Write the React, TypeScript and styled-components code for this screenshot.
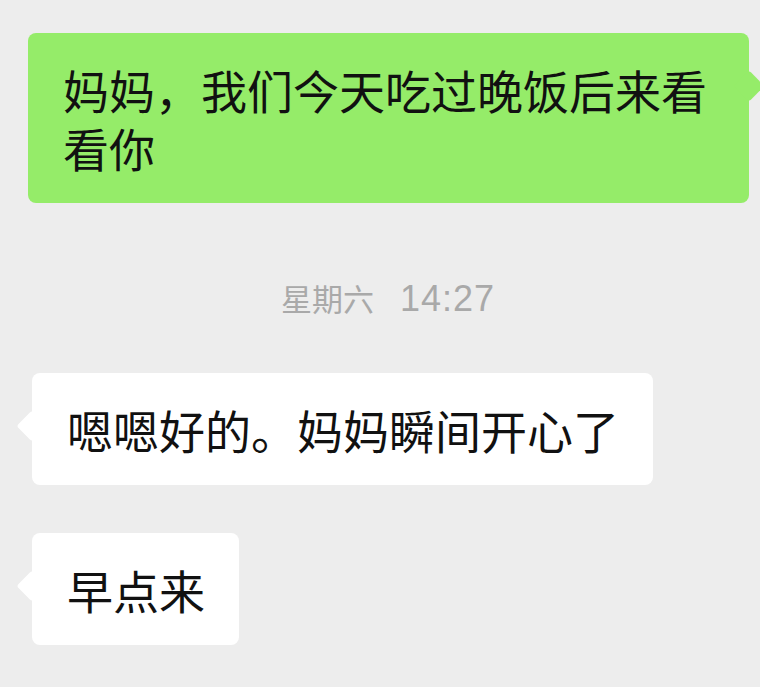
import styled, { createGlobalStyle, css } from "styled-components";

const GlobalStyle = createGlobalStyle`
  html, body {
    margin: 0;
    padding: 0;
    background: #ededed;
  }
  body {
    font-family: "Noto Sans CJK SC", "Noto Sans", sans-serif;
    overflow: hidden;
  }
`;

type Side = "self" | "other";

const messages: { id: number; side: Side; text: string }[] = [
  { id: 1, side: "self", text: "妈妈，我们今天吃过晚饭后来看看你" },
  { id: 2, side: "other", text: "嗯嗯好的。妈妈瞬间开心了" },
  { id: 3, side: "other", text: "早点来" },
];

const App = () => {
  return (
    <>
      <GlobalStyle />
      <Thread>
        <Row $side="self">
          <Bubble $side="self">{messages[0].text}</Bubble>
        </Row>
        <TimeStamp>
          <Day>星期六</Day>
          <Clock>14:27</Clock>
        </TimeStamp>
        {messages.slice(1).map((m) => (
          <Row key={m.id} $side={m.side}>
            <Bubble $side={m.side}>{m.text}</Bubble>
          </Row>
        ))}
      </Thread>
    </>
  );
};

export default App;

const Thread = styled.div`
  width: 760px;
  height: 687px;
  box-sizing: border-box;
  padding-top: 33px;
  display: flex;
  flex-direction: column;
  gap: 48px;
  overflow: hidden;
`;

const Row = styled.div<{ $side: Side }>`
  display: flex;
  justify-content: ${(p) => (p.$side === "self" ? "flex-end" : "flex-start")};
  padding: ${(p) => (p.$side === "self" ? "0 11px 0 0" : "0 0 0 32px")};
`;

const Bubble = styled.div<{ $side: Side }>`
  position: relative;
  max-width: 721px;
  box-sizing: border-box;
  padding: 27px 34px 27px 35px;
  border-radius: 8px;
  font-size: 46px;
  line-height: 58px;
  color: #111111;
  background: ${(p) => (p.$side === "self" ? "#95ec69" : "#ffffff")};

  &::before {
    content: "";
    position: absolute;
    top: 42px;
    width: 22px;
    height: 22px;
    border-radius: 3px;
    transform: rotate(45deg);
    background: inherit;
    ${(p) =>
      p.$side === "self"
        ? css`
            right: -11px;
          `
        : css`
            left: -11px;
          `}
  }
`;

const TimeStamp = styled.div`
  margin: 27px 0 7px;
  padding-left: 16px;
  display: flex;
  justify-content: center;
  align-items: baseline;
  gap: 26px;
  height: 40px;
  line-height: 40px;
  color: #a9a9a9;
`;

const Day = styled.span`
  font-family: "Noto Sans CJK SC", sans-serif;
  font-size: 31px;
`;

const Clock = styled.span`
  font-family: "Liberation Sans", Arial, sans-serif;
  font-size: 36px;
  letter-spacing: 1px;
`;
